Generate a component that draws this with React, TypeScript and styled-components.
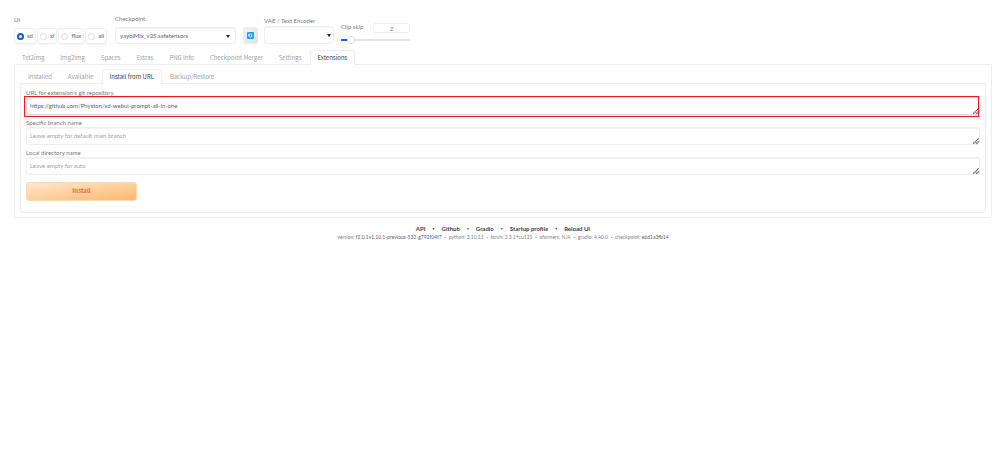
import React from "react";
import styled, { createGlobalStyle, css } from "styled-components";

const line = "#eeeeef";
const muted = "#9c9fa8";
const label = "#74777f";
const text = "#5d6068";

const GlobalStyle = createGlobalStyle`
  *, *::before, *::after { box-sizing: border-box; }
  body {
    margin: 0;
    background: #ffffff;
    color: ${text};
    font-family: Lato, "Noto Sans", sans-serif;
    font-size: 6px;
    line-height: 8px;
  }
  button, input, select, textarea { font: inherit; color: inherit; margin: 0; }
`;

const Page = styled.div`
  padding: 14px 8px 0 14px;
`;

const QuickSettings = styled.header`
  display: flex;
  align-items: flex-end;
  height: 30px;
`;

const RadioGroup = styled.fieldset`
  border: 0;
  margin: 0 8px 0 0;
  padding: 0;
  min-width: 0;
`;

const Caption = styled.legend`
  padding: 0;
  margin-bottom: 4px;
  color: ${label};
`;

const RadioRow = styled.div`
  display: flex;
  gap: 1px;
`;

const RadioChip = styled.label`
  display: flex;
  align-items: center;
  gap: 3px;
  height: 16px;
  padding: 0 2px;
  border: 1px solid ${line};
  border-radius: 3px;
  box-shadow: 0 1px 1px #f6f6f7;
`;

const Radio = styled.input`
  appearance: none;
  width: 7px;
  height: 7px;
  border: 1px solid #d9dadd;
  border-radius: 50%;
  background: #ffffff;

  &:checked {
    border: 2px solid #1d55e6;
  }
`;

const Field = styled.div<{ $width: number; $gap: number }>`
  display: flex;
  flex-direction: column;
  width: ${(p) => p.$width}px;
  margin-right: 7px;

  label {
    margin-bottom: ${(p) => p.$gap}px;
    color: ${label};
  }
`;

const SelectBox = styled.div`
  position: relative;

  svg {
    position: absolute;
    right: 3px;
    top: 8px;
    width: 4px;
    height: 3px;
    pointer-events: none;
  }
`;

const CheckpointBox = styled(SelectBox)`
  svg {
    right: 6px;
  }
`;

const Select = styled.select<{ $height: number }>`
  appearance: none;
  display: block;
  width: 100%;
  height: ${(p) => p.$height}px;
  padding: 0 12px 0 4px;
  border: 1px solid ${line};
  border-radius: 3px;
  background: #ffffff;
  box-shadow: inset 0 1px 1px #f6f6f7;
`;

const RefreshButton = styled.button`
  display: grid;
  place-items: center;
  width: 15px;
  height: 17px;
  padding: 0;
  margin-right: 6px;
  border: 0;
  border-radius: 3px;
  background: linear-gradient(135deg, #f0f1f3, #e1e3e7);
`;

const SliderField = styled.div`
  width: 69px;
`;

const SliderHead = styled.div`
  display: flex;
  justify-content: space-between;
  margin-bottom: 3px;
  color: ${label};
`;

const NumberInput = styled.input`
  width: 37px;
  height: 10px;
  padding: 0;
  border: 1px solid ${line};
  border-radius: 3px;
  background: #ffffff;
  text-align: center;
`;

const Range = styled.input`
  appearance: none;
  display: block;
  width: 100%;
  height: 8px;
  background: linear-gradient(to right, #1d55e6 10%, #e1e4e9 10%) center / 100% 2px no-repeat;

  &::-webkit-slider-thumb {
    appearance: none;
    width: 8px;
    height: 8px;
    border: 1px solid #dcdee1;
    border-radius: 50%;
    background: #ffffff;
  }
`;

const Tabs = styled.nav`
  display: flex;
  align-items: flex-end;
  height: 14px;
`;

const MainTabs = styled(Tabs)`
  margin-top: 6px;
`;

const SubTabs = styled(Tabs)`
  margin-top: 4px;
`;

const Tab = styled.button<{ $active?: boolean }>`
  height: 15px;
  margin-bottom: -1px;
  padding: 0 7px;
  border: 1px solid transparent;
  border-bottom: 0;
  border-radius: 3px 3px 0 0;
  background: transparent;
  color: ${muted};
  font-family: "Noto Sans CJK SC", "Noto Sans", sans-serif;
  line-height: 14px;
  white-space: nowrap;
  ${(p) =>
    p.$active &&
    css`
      position: relative;
      border-color: ${line};
      background: #ffffff;
      color: #3c404a;
    `}
`;

const Panel = styled.main`
  padding: 0 5px 4px;
  border: 1px solid ${line};
  border-radius: 0 0 3px 3px;
`;

const SubPanel = styled.section`
  padding: 5px 5px 11px;
  border: 1px solid ${line};
  border-radius: 0 0 3px 3px;
`;

const TextField = styled.div`
  margin-bottom: 4px;

  label {
    display: block;
    color: ${label};
  }
`;

const AreaBox = styled.div`
  position: relative;

  svg {
    position: absolute;
    right: 1px;
    bottom: 1px;
    width: 6px;
    height: 6px;
    pointer-events: none;
  }
`;

const Area = styled.textarea<{ $focused?: boolean }>`
  display: block;
  width: 100%;
  height: 18px;
  padding: 4px 3px;
  border: 1px solid ${(p) => (p.$focused ? "#cfe0f7" : line)};
  border-radius: 3px;
  background: #ffffff;
  box-shadow: ${(p) => (p.$focused ? "0 0 0 1px #dfebfb" : "inset 0 1px 1px #f3f3f4")};
  outline: none;
  resize: none;
  overflow: hidden;

  &::placeholder {
    color: ${muted};
    opacity: 1;
  }
`;

const Marker = styled.div`
  position: absolute;
  inset: -1px 1px -2px -2px;
  border: 1px solid #ec1c24;
  pointer-events: none;
`;

const InstallButton = styled.button`
  display: block;
  width: 111px;
  height: 19px;
  margin-top: 7px;
  padding: 0 0 1px;
  border: 1px solid #fdd9af;
  border-radius: 3px;
  background: linear-gradient(to bottom right, #ffe8cd, #fdb770);
  color: #e8683a;
  font-family: "Noto Sans CJK SC", "Noto Sans", sans-serif;
  font-weight: 700;
`;

const Footer = styled.footer`
  padding: 7px 0;
  text-align: center;
`;

const Bullet = styled.span`
  font-family: "Noto Sans CJK SC", "Noto Sans", sans-serif;
  &::before { content: "•"; }
`;

const Links = styled.div`
  display: flex;
  justify-content: center;
  gap: 5px;
  color: #3c404a;
  font-weight: 700;

  a {
    color: inherit;
    text-decoration: none;
  }
`;

const Versions = styled.div`
  display: flex;
  justify-content: center;
  gap: 1px;
  color: #7d818a;
  font-size: 5px;

  a {
    color: ${text};
    text-decoration: none;
  }
`;

const Caret = () => (
  <svg viewBox="0 0 4 3" aria-hidden="true">
    <path d="M0 0h4L2 3z" fill="#1f2329" />
  </svg>
);

const Grip = () => (
  <svg viewBox="0 0 6 6" aria-hidden="true">
    <path
      d="M0.3 5.7L5.7 0.3M3.3 5.7L5.7 3.3"
      stroke="#55585e"
      strokeWidth="1.3"
      strokeDasharray="1.4 0.4"
      fill="none"
    />
  </svg>
);

const RefreshIcon = () => (
  <svg width="7" height="7" viewBox="0 0 14 14" aria-hidden="true">
    <rect width="14" height="14" rx="2" fill="#10a5e8" />
    <path
      d="M10.5 6.5Q10 4 7 4T3.5 7M3.5 3.5V7H6M3.5 8Q4 10.5 7 10.5T10.5 7.5H8"
      fill="none"
      stroke="#ffffff"
      strokeWidth="1.5"
    />
  </svg>
);

const modes = ["sd", "xl", "flux", "all"];
const mainTabs = ["Txt2img", "Img2img", "Spaces", "Extras", "PNG Info", "Checkpoint Merger", "Settings", "Extensions"];
const subTabs = ["Installed", "Available", "Install from URL", "Backup/Restore"];
const links = ["API", "Github", "Gradio", "Startup profile", "Reload UI"];

type AreaProps = { id: string; label: string; value?: string; placeholder?: string; marked?: boolean };

const LabeledArea = ({ id, label, value, placeholder, marked }: AreaProps) => (
  <TextField>
    <label htmlFor={id}>{label}</label>
    <AreaBox>
      <Area id={id} rows={1} defaultValue={value} placeholder={placeholder} spellCheck={false} $focused={marked} />
      <Grip />
      {marked && <Marker />}
    </AreaBox>
  </TextField>
);

export default function App() {
  return (
    <>
      <GlobalStyle />
      <Page>
        <QuickSettings>
          <RadioGroup>
            <Caption>UI</Caption>
            <RadioRow>
              {modes.map((mode) => (
                <RadioChip key={mode}>
                  <Radio type="radio" name="ui" defaultChecked={mode === "sd"} />
                  {mode}
                </RadioChip>
              ))}
            </RadioRow>
          </RadioGroup>
          <Field $width={121} $gap={4}>
            <label htmlFor="checkpoint">Checkpoint</label>
            <CheckpointBox>
              <Select id="checkpoint" $height={17}>
                <option>yayoiMix_v25.safetensors</option>
              </Select>
              <Caret />
            </CheckpointBox>
          </Field>
          <RefreshButton aria-label="Refresh">
            <RefreshIcon />
          </RefreshButton>
          <Field $width={70} $gap={1}>
            <label htmlFor="vae">VAE / Text Encoder</label>
            <SelectBox>
              <Select id="vae" $height={18} />
              <Caret />
            </SelectBox>
          </Field>
          <SliderField>
            <SliderHead>
              <label htmlFor="clip">Clip skip</label>
              <NumberInput id="clip" defaultValue="2" />
            </SliderHead>
            <Range type="range" min={1} max={12} defaultValue={2} aria-label="Clip skip" />
          </SliderField>
        </QuickSettings>

        <MainTabs>
          {mainTabs.map((name) => (
            <Tab key={name} $active={name === "Extensions"}>
              {name}
            </Tab>
          ))}
        </MainTabs>
        <Panel>
          <SubTabs>
            {subTabs.map((name) => (
              <Tab key={name} $active={name === "Install from URL"}>
                {name}
              </Tab>
            ))}
          </SubTabs>
          <SubPanel>
            <LabeledArea
              id="url"
              label="URL for extension's git repository"
              value="https://github.com/Physton/sd-webui-prompt-all-in-one"
              marked
            />
            <LabeledArea id="branch" label="Specific branch name" placeholder="Leave empty for default main branch" />
            <LabeledArea id="directory" label="Local directory name" placeholder="Leave empty for auto" />
            <InstallButton>Install</InstallButton>
          </SubPanel>
        </Panel>

        <Footer>
          <Links>
            {links.map((name, i) => (
              <React.Fragment key={name}>
                {i > 0 && <Bullet />}
                <a href="#">{name}</a>
              </React.Fragment>
            ))}
          </Links>
          <Versions>
            <span>
              version: <a href="#">f2.0.1v1.10.1-previous-532-g791f04f7</a>
            </span>
            <Bullet />
            <span>python: 3.10.11</span>
            <Bullet />
            <span>torch: 2.3.1+cu121</span>
            <Bullet />
            <span>xformers: N/A</span>
            <Bullet />
            <span>gradio: 4.40.0</span>
            <Bullet />
            <span>
              checkpoint: <a href="#">e6d1a3fb14</a>
            </span>
          </Versions>
        </Footer>
      </Page>
    </>
  );
}
